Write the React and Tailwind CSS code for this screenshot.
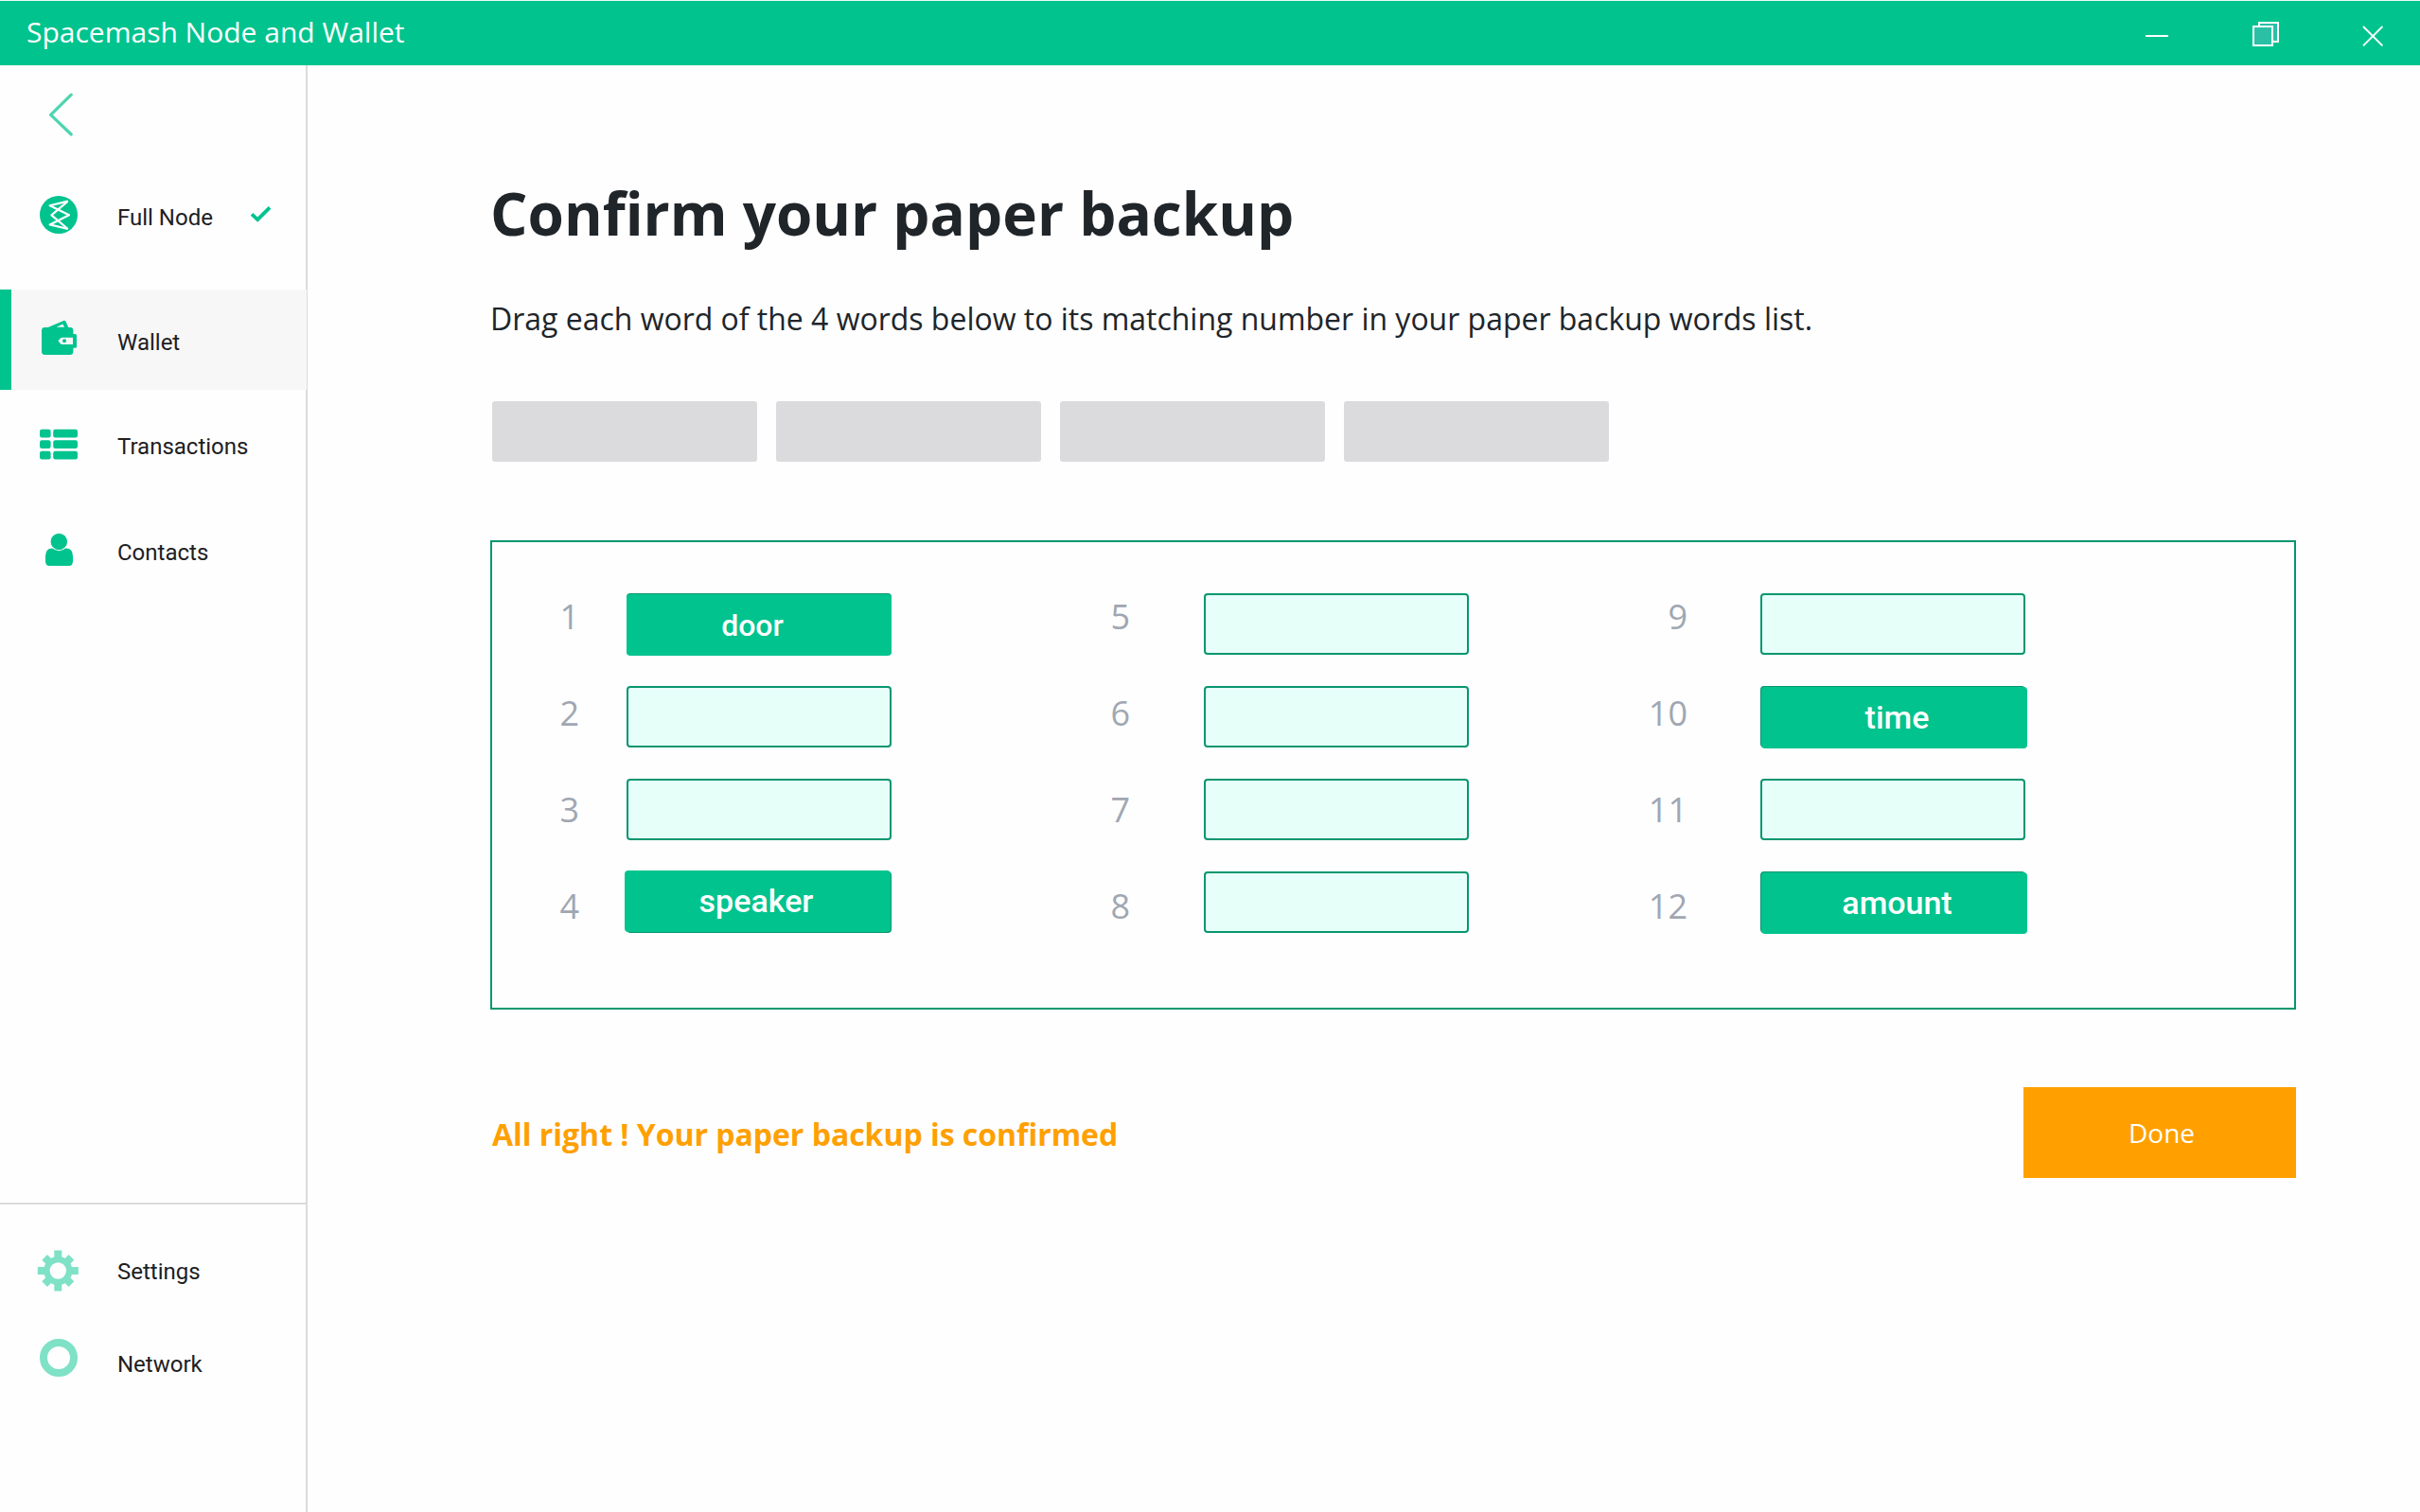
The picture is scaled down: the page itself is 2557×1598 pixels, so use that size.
import React from "react";

const GREEN = "#00c38e";
const MINT = "#7fe1c6";

function FullNodeIcon() {
  return (
    <svg width="44" height="44" viewBox="0 0 44 44" className="overflow-visible">
      <circle cx="22" cy="19" r="20" fill={GREEN} />
      <g fill="none" stroke="#fff" strokeWidth="2.2" strokeLinejoin="round">
        <path d="M31.7 4.6 12.7 9.2 33 19.3 12.7 29.4 31.7 34" />
        <path d="M31.7 4.6 14.4 19.3 31.7 34" />
      </g>
    </svg>
  );
}

function WalletIcon() {
  return (
    <svg width="44" height="44" viewBox="0 0 44 44" className="overflow-visible">
      <path d="M9.5 6.4 27.2-1.1Q28.7-1.7 29.5-.2L32.5 6.4Z" fill={GREEN} />
      <path d="M19.6 5.7 26.3 2.6 28.1 5.7Z" fill="#f7f7f7" />
      <rect x="4" y="6" width="33.4" height="29" rx="3.4" fill={GREEN} />
      <rect x="30" y="13" width="11" height="14.8" rx="1.6" fill={GREEN} />
      <path d="M21.4 20.3 24 17.4Q24.7 16.7 25.7 16.7H37V24H25.7Q24.7 24 24 23.3Z" fill="#f7f7f7" />
      <circle cx="28" cy="20.3" r="2" fill={GREEN} />
    </svg>
  );
}

function TransactionsIcon() {
  return (
    <svg width="44" height="44" viewBox="0 0 44 44" fill={GREEN}>
      {[3.7, 15.3, 26.8].map((y) => (
        <g key={y}>
          <rect x="2" y={y} width="11.6" height="8.7" rx="2.2" />
          <rect x="16.2" y={y} width="25.8" height="8.7" rx="2.2" />
        </g>
      ))}
    </svg>
  );
}

function ContactsIcon() {
  return (
    <svg width="44" height="44" viewBox="0 0 44 44" fill={GREEN}>
      <path d="M8 31V26Q8 17.6 15 17.4H30Q37 17.6 37 26V31Q37 36 33 36H12Q8 36 8 31Z" />
      <circle cx="22.3" cy="10.4" r="9.3" stroke="#fefefe" strokeWidth="1.1" />
    </svg>
  );
}

function SettingsIcon() {
  return (
    <svg width="44" height="44" viewBox="0 0 44 44" className="overflow-visible" fill={MINT}>
      {[0, 90, 180, 270].map((a) => (
        <rect key={a} x="17.3" y="-0.5" width="8" height="12" transform={`rotate(${a} 21.3 21)`} />
      ))}
      {[45, 135, 225, 315].map((a) => (
        <rect key={a} x="17.3" y="1" width="8" height="10" transform={`rotate(${a} 21.3 21)`} />
      ))}
      <circle cx="21.3" cy="21" r="11.9" fill="none" stroke={MINT} strokeWidth="6.4" />
    </svg>
  );
}

function NetworkIcon() {
  return (
    <svg width="44" height="44" viewBox="0 0 44 44" className="overflow-visible">
      <circle cx="22" cy="15" r="16" fill="none" stroke={MINT} strokeWidth="8" />
    </svg>
  );
}

function NavItem({ icon, label, className = "", children }) {
  return (
    <div className={`flex shrink-0 items-center ${className}`}>
      <span className="w-[84px] shrink-0">{icon}</span>
      <span>{label}</span>
      {children}
    </div>
  );
}

function Sidebar() {
  return (
    <nav className="flex w-[325px] shrink-0 flex-col border-r-2 border-[#dbdbdd] font-['Roboto',sans-serif] text-2xl leading-7 text-[#20201f]">
      <button className="flex h-[108px] shrink-0 items-start pt-[29px] pl-[51px]">
        <svg width="27" height="48" viewBox="0 0 27 48" className="block" fill="none" stroke="#4dd5b0" strokeWidth="3.2" strokeLinecap="round" strokeLinejoin="round">
          <path d="M24.2 2.2 2.6 23.3 24.2 44" />
        </svg>
      </button>
      <div className="flex grow flex-col">
        <NavItem icon={<FullNodeIcon />} label="Full Node" className="h-[106px] pl-10">
          <svg width="24" height="24" viewBox="0 0 24 24" className="ml-auto mr-[35px] overflow-visible" fill="none" stroke={GREEN} strokeWidth="3.8">
            <path d="M2 8.4 8.2 14.2 21 1.3" />
          </svg>
        </NavItem>
        <NavItem icon={<WalletIcon />} label="Wallet" className="mt-[23px] -mr-px h-[106px] border-l-12 border-[#00c38e] bg-[#f7f7f7] pt-1.5 pl-7" />
        <NavItem icon={<TransactionsIcon />} label="Transactions" className="mt-[7px] h-[106px] pl-10" />
        <NavItem icon={<ContactsIcon />} label="Contacts" className="mt-1.5 h-[106px] pl-10" />
      </div>
      <div className="h-[327px] shrink-0 border-t-2 border-[#dbdbdd] pt-[22px]">
        <NavItem icon={<SettingsIcon />} label="Settings" className="h-[98px] pl-10" />
        <NavItem icon={<NetworkIcon />} label="Network" className="h-[98px] pl-10" />
      </div>
    </nav>
  );
}

function TitleBar() {
  return (
    <header className="flex h-[69px] shrink-0 items-start justify-between border-t border-[#eafaf5] bg-[#00c38e] text-white">
      <h1 className="pt-3 pl-7 text-[30px] leading-[41px]">Spacemash Node and Wallet</h1>
      <div className="flex pt-[21px] pr-[38px]">
        <svg width="26" height="28" viewBox="0 0 26 28" className="mr-[87px]">
          <path d="M0 16H24" stroke="#fff" strokeWidth="2" />
        </svg>
        <svg width="28" height="28" viewBox="0 0 28 28" className="mr-[88px]" fill="#2bc0a6" stroke="#fff" strokeWidth="2">
          <rect x="7" y="2" width="20" height="20" />
          <rect x="1" y="6" width="20" height="20" />
        </svg>
        <svg width="23" height="28" viewBox="0 0 23 28" fill="none" stroke="#fff" strokeWidth="1.9">
          <path d="M1 6 21.4 26.4M21.4 6 1 26.4" />
        </svg>
      </div>
    </header>
  );
}

function Slot({ word, tile }) {
  return (
    <div className="relative h-[65px] w-[280px] rounded-[4px] border-2 border-[#07966f] bg-[#e6fff9]">
      {word && (
        <div className={`absolute flex h-[65px] justify-center rounded-[4px] bg-[#00c38e] font-['Roboto',sans-serif] font-medium text-white ${tile}`}>
          {word}
        </div>
      )}
    </div>
  );
}

function WordColumn({ start, slots, className }) {
  return (
    <div className={`flex ${className}`}>
      <div className="flex w-[60px] flex-col gap-[53px] text-right text-[36px] leading-[49px] text-[#a0a7b2]">
        {slots.map((_, i) => (
          <span key={i}>{start + i}</span>
        ))}
      </div>
      <div className="flex flex-col gap-[33px]">
        {slots.map((s, i) => (
          <Slot key={i} {...s} />
        ))}
      </div>
    </div>
  );
}

const BIG = "w-[281px] pt-3 text-[34px] leading-10";

export default function App() {
  return (
    <div className="flex h-[1598px] w-[2557px] flex-col overflow-hidden bg-[#fefefe] font-['Open_Sans',sans-serif]">
      <TitleBar />
      <div className="flex grow">
        <Sidebar />
        <main className="w-[2101px] pt-[114px] pl-[193px] text-[#20252a]">
          <h2 className="text-[62px] leading-[84px] font-bold">Confirm your paper backup</h2>
          <p className="mt-12 text-[32px] leading-[43px] tracking-[-0.015px]">
            Drag each word of the 4 words below to its matching number in your paper backup words list.
          </p>
          <div className="mt-[66px] ml-0.5 flex gap-5">
            {[0, 1, 2, 3].map((i) => (
              <div key={i} className="h-16 w-[280px] rounded-[3px] bg-[#dbdbdd]" />
            ))}
          </div>
          <section className="mt-[83px] flex h-[496px] w-[1908px] border-2 border-[#07966f] pt-[54px] pl-8">
            <WordColumn
              start={1}
              className="gap-[50px]"
              slots={[
                { word: "door", tile: "-left-0.5 -top-px w-[280px] pt-3.5 pr-3.5 text-[32px] leading-[38px]" },
                {},
                {},
                { word: "speaker", tile: `-left-1 -top-[3px] pr-[3px] ${BIG}` },
              ]}
            />
            <WordColumn start={5} className="ml-[192px] gap-[78px]" slots={[{}, {}, {}, {}]} />
            <WordColumn
              start={9}
              className="ml-[171px] gap-[77px]"
              slots={[
                {},
                { word: "time", tile: `-left-px -top-px pl-1.5 ${BIG}` },
                {},
                { word: "amount", tile: `-left-px -top-px pl-1.5 ${BIG}` },
              ]}
            />
          </section>
          <div className="mt-[82px] flex w-[1908px] items-start justify-between pl-0.5">
            <p className="mt-7 text-[32px] leading-[43px] font-bold tracking-[-0.025px] text-[#ffa000]">
              All right ! Your paper backup is confirmed
            </p>
            <button className="flex h-24 w-[288px] justify-center bg-[#ffa000] pt-[29px] pl-1 text-[28px] leading-[38px] text-white">
              Done
            </button>
          </div>
        </main>
      </div>
    </div>
  );
}
